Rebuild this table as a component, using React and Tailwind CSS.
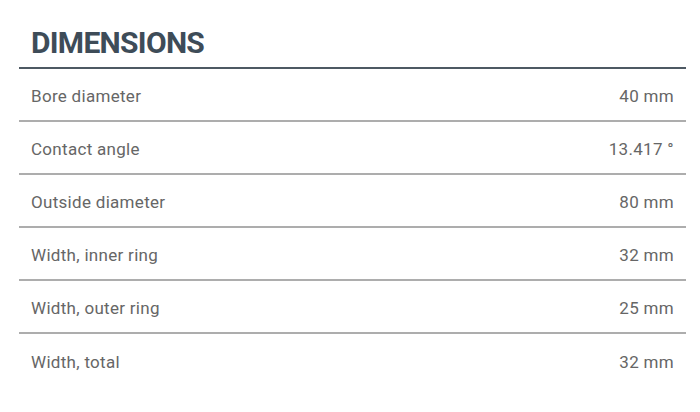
const rows = [
  { label: 'Bore diameter', value: '40 mm' },
  { label: 'Contact angle', value: '13.417 °' },
  { label: 'Outside diameter', value: '80 mm' },
  { label: 'Width, inner ring', value: '32 mm' },
  { label: 'Width, outer ring', value: '25 mm' },
  { label: 'Width, total', value: '32 mm' },
];

export default function App() {
  return (
    <div className="w-[700px] h-[412px] bg-white pl-[19px] pt-[23px] font-['Roboto',sans-serif]">
      <div className="w-[667px]">
        {/* Heading */}
        <h2 className="h-[46px] pl-[12px] text-[30px] leading-[40px] font-bold tracking-[-0.7px] text-[#3e4c58] border-b-2 border-[#4e5963]">
          DIMENSIONS
        </h2>

        {/* Rows */}
        {rows.map(({ label, value }, i) => (
          <div
            key={label}
            className={`flex justify-between items-center h-[53px] pt-[5px] px-[12px] text-[17px] tracking-[0.3px] text-[#666666] ${i < rows.length - 1 ? 'border-b-2 border-[#adadad]' : ''}`}
          >
            <span>{label}</span>
            <span>{value}</span>
          </div>
        ))}
      </div>
    </div>
  );
}
